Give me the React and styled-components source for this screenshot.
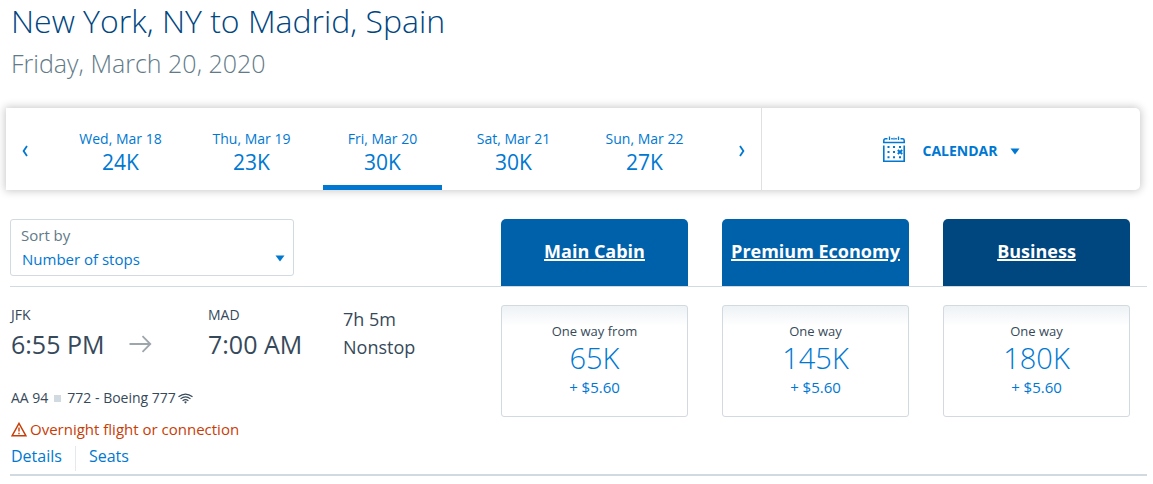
import React from "react";
import styled, { createGlobalStyle } from "styled-components";

const color = {
  link: "#0078d2",
  navy: "#00467f",
  cabin: "#0061ab",
  text: "#36495a",
  muted: "#627a88",
  line: "#d0dae0",
  warning: "#c73d06",
};

const GlobalStyle = createGlobalStyle`
  *, *::before, *::after { box-sizing: border-box; }
  body {
    margin: 0;
    background: #fff;
    color: ${color.text};
    font-family: "Open Sans", "Noto Sans", sans-serif;
    font-size: 14px;
    line-height: 20px;
  }
  button, select { font: inherit; cursor: pointer; }
`;

const Page = styled.main`
  padding: 0 6px 8px 10px;
`;

const Title = styled.h1`
  margin: 0;
  padding: 1px 0 0 1px;
  color: ${color.navy};
  font-size: 32px;
  font-weight: 300;
  line-height: 40px;
`;

const Subtitle = styled.p`
  margin: 0;
  padding-left: 1px;
  color: ${color.muted};
  font-size: 25px;
  font-weight: 300;
  line-height: 44px;
`;

const DateBar = styled.nav`
  display: grid;
  grid-template-columns: 2fr 1fr;
  height: 82px;
  margin: 23px 7px 29px -4px;
  border-radius: 0 5px 5px 0;
  background: #fff;
  box-shadow: 0 0 8px 1px rgba(0, 0, 0, 0.22);
`;

const Week = styled.div`
  display: flex;
  border-right: 1px solid #e0e0e0;
`;

const Step = styled.button`
  display: flex;
  align-items: center;
  justify-content: center;
  width: 38px;
  padding: 4px 0 0;
  border: 0;
  background: none;
  color: ${color.link};
`;

const Days = styled.div`
  display: grid;
  flex: 1;
  grid-template-columns: repeat(5, 1fr);
  gap: 12px;
  padding: 0 19px 0 17px;
`;

const Day = styled.button`
  display: flex;
  flex-direction: column;
  align-items: center;
  padding: 20px 0 0;
  border: 0;
  border-bottom: 5px solid ${(p) => (p.$current ? color.link : "transparent")};
  background: none;
  color: ${color.link};
  white-space: nowrap;
`;

const DayName = styled.span`
  font-size: 14px;
  line-height: 22px;
`;

const DayPrice = styled.span`
  font-size: 21px;
  line-height: 24px;
`;

const CalendarButton = styled.button`
  display: flex;
  align-items: center;
  justify-content: center;
  gap: 17px;
  padding: 0;
  border: 0;
  background: none;
  color: ${color.link};
  font-weight: 700;
`;

const CalendarLabel = styled.span`
  display: flex;
  align-items: center;
  gap: 13px;
  padding-top: 4px;
`;

const Columns = styled.div`
  display: grid;
  grid-template-columns: 1fr repeat(3, 187px);
  gap: 34px;
  padding-right: 17px;
`;

const ResultsHead = styled(Columns)`
  border-bottom: 1px solid ${color.line};
`;

const SortBox = styled.div`
  position: relative;
  width: 284px;
  height: 57px;
  padding: 5px 8px 0 10px;
  border: 1px solid ${color.line};
  border-radius: 3px;
`;

const SortLabel = styled.label`
  display: block;
  color: ${color.muted};
  font-size: 15px;
`;

const SortSelect = styled.select`
  display: block;
  width: 100%;
  height: 28px;
  padding: 0 0 0 1px;
  border: 0;
  appearance: none;
  background: none;
  color: ${color.link};
  font-size: 15px;
`;

const SortCaret = styled.span`
  position: absolute;
  right: 8px;
  bottom: 13px;
  display: flex;
  pointer-events: none;
`;

const CabinTab = styled.div`
  display: flex;
  align-items: center;
  justify-content: center;
  height: 67px;
  padding-bottom: 3px;
  border-radius: 5px 5px 0 0;
  background: ${(p) => (p.$dark ? color.navy : color.cabin)};
`;

const CabinLink = styled.a`
  color: #fff;
  font-size: 18px;
  font-weight: 700;
  line-height: 24px;
  text-decoration: underline;
  text-decoration-thickness: 2px;
  white-space: nowrap;
`;

const FlightRow = styled(Columns)`
  align-items: start;
  padding-top: 18px;
  padding-bottom: 3px;
  border-bottom: 2px solid ${color.line};
`;

const Itinerary = styled.div`
  display: grid;
  grid-template-columns: 118px 79px 135px 1fr;
  white-space: nowrap;
`;

const Flight = styled.div`
  padding-left: 1px;
`;

const Stop = styled.div`
  display: flex;
  flex-direction: column;
`;

const Airport = styled.span`
  line-height: 20px;
`;

const Time = styled.span`
  font-size: 25px;
  line-height: 38px;
`;

const ArrowCell = styled.div`
  display: flex;
  align-items: flex-end;
  padding-bottom: 10px;
`;

const Duration = styled.div`
  font-size: 18px;
  line-height: 28px;
`;

const Aircraft = styled.div`
  display: flex;
  align-items: center;
  gap: 6px;
  margin-top: 25px;
`;

const AircraftType = styled.span`
  display: flex;
  align-items: center;
  gap: 2px;
`;

const Square = styled.span`
  width: 7px;
  height: 7px;
  background: ${color.line};
`;

const Notice = styled.div`
  display: flex;
  align-items: center;
  gap: 3px;
  margin-top: 10px;
  color: ${color.warning};
  font-size: 15px;
  line-height: 22px;
`;

const Links = styled.div`
  display: flex;
  margin-top: 6px;
  line-height: 20px;
`;

const TextLink = styled.a`
  height: 25px;
  color: ${color.link};
  font-size: 16px;
  text-decoration: none;

  & + & {
    margin-left: 13px;
    padding-left: 13px;
    border-left: 1px solid #e6e9eb;
  }
`;

const Fare = styled.button`
  display: flex;
  flex-direction: column;
  align-items: center;
  height: 112px;
  padding: 16px 0 0;
  border: 1px solid ${color.line};
  border-radius: 3px;
  background: linear-gradient(#eef2f5, #fff 20px);
  color: ${color.link};
`;

const FareKind = styled.span`
  color: ${color.text};
  font-size: 13px;
  line-height: 18px;
`;

const FareMiles = styled.span`
  font-size: 29px;
  font-weight: 300;
  line-height: 36px;
`;

const FareTax = styled.span`
  font-size: 15px;
  line-height: 22px;
`;

const Chevron = ({ right }) => (
  <svg width="8" height="14" viewBox="0 0 8 14" fill="none" stroke="currentColor" strokeWidth="1.8" aria-hidden="true">
    <path d={right ? "M2 2 5.4 7 2 12" : "M6 2 2.6 7 6 12"} />
  </svg>
);

const Caret = () => (
  <svg width="10" height="7" viewBox="0 0 10 7" fill={color.link} aria-hidden="true">
    <path d="M.5 .5h9L5 6.5z" />
  </svg>
);

const CalendarIcon = () => (
  <svg width="24" height="28" viewBox="0 0 24 28" fill="none" stroke="currentColor" aria-hidden="true">
    <path d="M1.8 7.5V5.5Q1.8 3.8 3.5 3.8H5.5M9.2 3.8h1.6M13.2 3.8h1.6M18.5 3.8h2Q22.2 3.8 22.2 5.5V7.5M1 7.5h22" strokeWidth="1.5" />
    <path d="M7.5 1.5v3.5M12 2.8v2M16.5 1.5v3.5" strokeWidth="1.3" />
    <path d="M1.8 10.5v15.7h20.4V10.5" strokeWidth="1.6" />
    <path d="M5.5 12h2M11 12h2M17 12h2M5.5 17h2M11 17h2M5.5 22.2h2M11 22.2h2M17 22.2h2" strokeWidth="2" />
    <path d="m15.8 15 4.4 4m0-4-4.4 4" strokeWidth="2" />
  </svg>
);

const Arrow = () => (
  <svg width="23" height="18" viewBox="0 0 23 18" fill="none" stroke="#9da6ab" strokeWidth="1.8" aria-hidden="true">
    <path d="M.5 9h21M13.5 1.2 21.3 9l-7.8 7.8" />
  </svg>
);

const WifiIcon = () => (
  <svg width="15" height="11" viewBox="0 0 15 11" fill="none" stroke={color.text} strokeWidth="1.2" role="img" aria-label="Wi-Fi">
    <path d="M.5 3.8Q7.5-1.6 14.5 3.8M2.5 5.9q5-4 10 0M4.6 7.9q2.9-2.4 5.8 0" />
    <circle cx="7.5" cy="9.3" r="1.1" fill={color.text} stroke="none" />
  </svg>
);

const WarningIcon = () => (
  <svg width="16" height="15" viewBox="0 0 16 15" fill="none" stroke="currentColor" strokeWidth="1.4" aria-hidden="true">
    <path d="M8 1.3 14.9 13.8H1.1zM8 5.5v4M8 10.8v1.5" />
  </svg>
);

const days = [
  ["Wed, Mar 18", "24K"],
  ["Thu, Mar 19", "23K"],
  ["Fri, Mar 20", "30K"],
  ["Sat, Mar 21", "30K"],
  ["Sun, Mar 22", "27K"],
];

const cabins = [
  { name: "Main Cabin", kind: "One way from", miles: "65K" },
  { name: "Premium Economy", kind: "One way", miles: "145K" },
  { name: "Business", kind: "One way", miles: "180K", dark: true },
];

export default function App() {
  return (
    <>
      <GlobalStyle />
      <Page>
        <Title>New York, NY to Madrid, Spain</Title>
        <Subtitle>Friday, March 20, 2020</Subtitle>

        <DateBar>
          <Week>
            <Step aria-label="Previous dates"><Chevron /></Step>
            <Days>
              {days.map(([name, price], i) => (
                <Day key={name} $current={i === 2}>
                  <DayName>{name}</DayName>
                  <DayPrice>{price}</DayPrice>
                </Day>
              ))}
            </Days>
            <Step aria-label="Next dates"><Chevron right /></Step>
          </Week>
          <CalendarButton>
            <CalendarIcon />
            <CalendarLabel>CALENDAR <Caret /></CalendarLabel>
          </CalendarButton>
        </DateBar>

        <ResultsHead>
          <SortBox>
            <SortLabel htmlFor="sort">Sort by</SortLabel>
            <SortSelect id="sort" defaultValue="stops">
              <option value="stops">Number of stops</option>
            </SortSelect>
            <SortCaret><Caret /></SortCaret>
          </SortBox>
          {cabins.map((c) => (
            <CabinTab key={c.name} $dark={c.dark}>
              <CabinLink href="#">{c.name}</CabinLink>
            </CabinTab>
          ))}
        </ResultsHead>

        <FlightRow>
          <Flight>
            <Itinerary>
              <Stop><Airport>JFK</Airport><Time>6:55 PM</Time></Stop>
              <ArrowCell><Arrow /></ArrowCell>
              <Stop><Airport>MAD</Airport><Time>7:00 AM</Time></Stop>
              <Duration>7h 5m<br />Nonstop</Duration>
            </Itinerary>
            <Aircraft>
              <span>AA 94</span>
              <Square />
              <AircraftType>772 - Boeing 777 <WifiIcon /></AircraftType>
            </Aircraft>
            <Notice><WarningIcon />Overnight flight or connection</Notice>
            <Links>
              <TextLink href="#">Details</TextLink>
              <TextLink href="#">Seats</TextLink>
            </Links>
          </Flight>
          {cabins.map((c) => (
            <Fare key={c.name}>
              <FareKind>{c.kind}</FareKind>
              <FareMiles>{c.miles}</FareMiles>
              <FareTax>+ $5.60</FareTax>
            </Fare>
          ))}
        </FlightRow>
      </Page>
    </>
  );
}
